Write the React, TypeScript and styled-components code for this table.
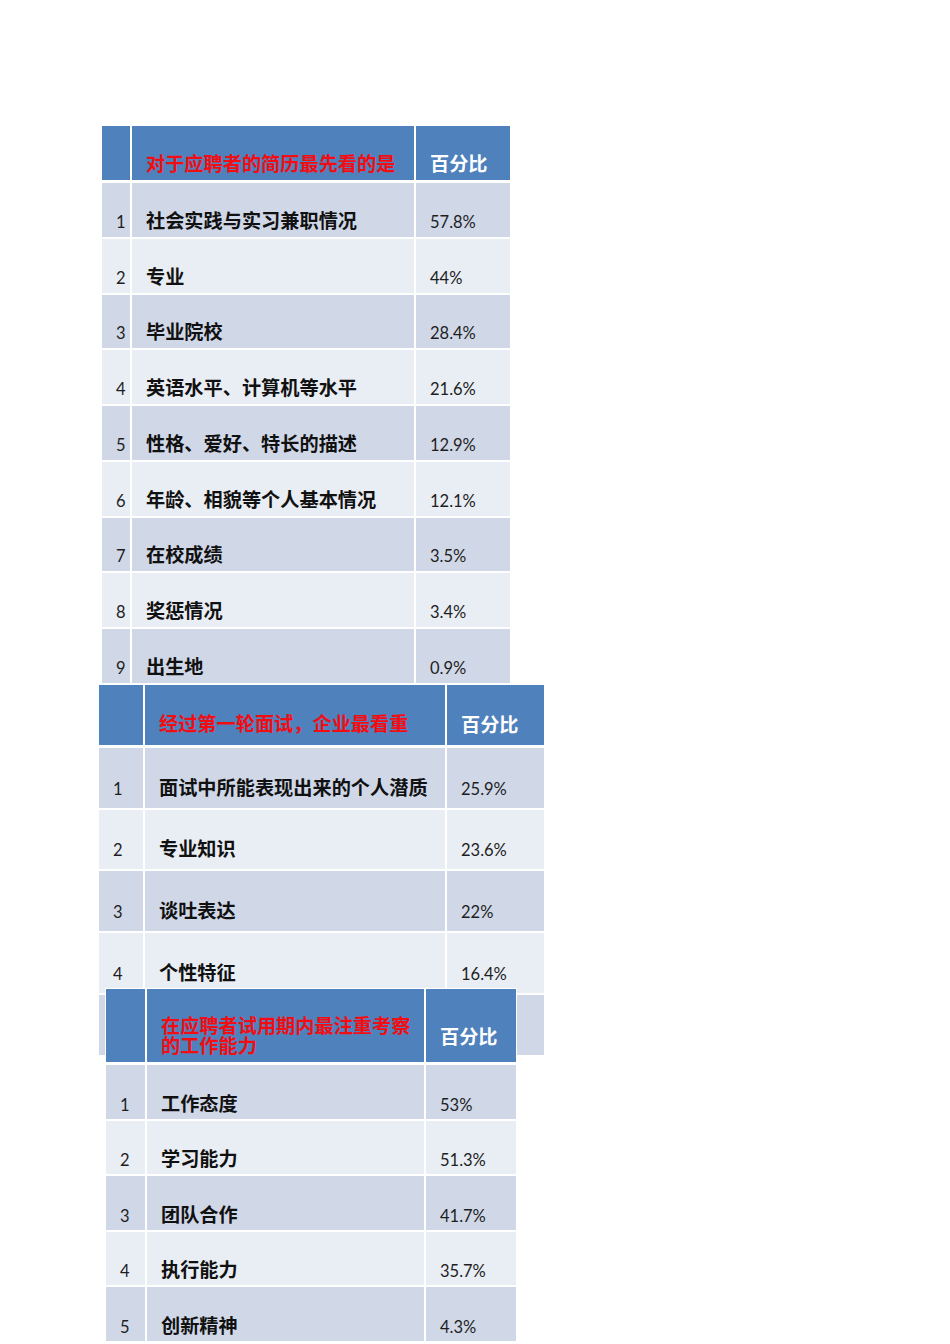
import React from "react";
import styled, { createGlobalStyle } from "styled-components";

const GlobalStyle = createGlobalStyle`
  html, body {
    margin: 0;
    padding: 0;
    background: #fff;
    overflow: hidden;
  }
`;

type Band = "head" | "odd" | "even";

const bandColor: Record<Band, string> = {
  head: "#4f81bd",
  odd: "#d0d8e8",
  even: "#e9edf4",
};

const Page = styled.main`
  width: 950px;
  height: 1344px;
  padding-top: 125px;
  box-sizing: border-box;
  display: flex;
  flex-direction: column;
  align-items: flex-start;
`;

const Sheet = styled.section<{
  $left: number;
  $cols: string;
  $head: number;
  $row: number;
  $overlap?: number;
}>`
  position: relative;
  margin-left: ${(p) => p.$left - 1}px;
  margin-top: ${(p) => (p.$overlap ? -p.$overlap : 0)}px;
  padding: 1px;
  background: #fff;
  display: grid;
  grid-template-columns: ${(p) => p.$cols};
  grid-template-rows: ${(p) => p.$head + 1}px;
  grid-auto-rows: ${(p) => p.$row}px;
  gap: 2px;
`;

const Cell = styled.div<{ $band: Band; $pad: number }>`
  background: ${(p) => bandColor[p.$band]};
  margin-bottom: ${(p) => (p.$band === "head" ? 1 : 0)}px;
  display: flex;
  align-items: flex-end;
  padding: 0 2px ${(p) => p.$pad}px 14px;
  box-sizing: border-box;
  overflow: hidden;
`;

const Num = styled.span`
  font-family: Lato, "Liberation Sans", sans-serif;
  font-size: 16.5px;
  line-height: 16px;
  color: #1e1e1e;
  white-space: nowrap;
`;

const Label = styled.span`
  font-family: "Noto Sans CJK SC", "Noto Sans", sans-serif;
  font-weight: 700;
  font-size: 19.2px;
  line-height: 19px;
  color: #111;
  white-space: nowrap;
`;

const Title = styled.span`
  font-family: "Noto Sans CJK SC", "Noto Sans", sans-serif;
  font-weight: 700;
  font-size: 19.2px;
  line-height: 19.3px;
  color: #f20d12;
`;

const HeadPct = styled(Label)`
  color: #fff;
`;

type Row = [string, string];

type TableSpec = {
  left: number;
  cols: string;
  head: number;
  row: number;
  overlap?: number;
  title: React.ReactNode;
  headPad: number;
  pctPad: number;
  rowPad: number;
  rows: Row[];
};

const tables: TableSpec[] = [
  {
    left: 102,
    cols: "28px 282px 94px",
    head: 54,
    row: 53.75,
    title: "对于应聘者的简历最先看的是",
    headPad: 7,
    pctPad: 7,
    rowPad: 7,
    rows: [
      ["社会实践与实习兼职情况", "57.8%"],
      ["专业", "44%"],
      ["毕业院校", "28.4%"],
      ["英语水平、计算机等水平", "21.6%"],
      ["性格、爱好、特长的描述", "12.9%"],
      ["年龄、相貌等个人基本情况", "12.1%"],
      ["在校成绩", "3.5%"],
      ["奖惩情况", "3.4%"],
      ["出生地", "0.9%"],
    ],
  },
  {
    left: 99,
    cols: "44px 300px 97px",
    head: 60,
    row: 59.75,
    title: "经过第一轮面试，企业最看重",
    headPad: 11,
    pctPad: 11,
    rowPad: 11,
    rows: [
      ["面试中所能表现出来的个人潜质", "25.9%"],
      ["专业知识", "23.6%"],
      ["谈吐表达", "22%"],
      ["个性特征", "16.4%"],
      ["", ""],
    ],
  },
  {
    left: 106,
    cols: "39px 277px 90px",
    head: 73,
    row: 53.5,
    overlap: 67.5,
    title: (
      <>
        在应聘者试用期内最注重考察
        <br />
        的工作能力
      </>
    ),
    headPad: 7,
    pctPad: 16,
    rowPad: 6,
    rows: [
      ["工作态度", "53%"],
      ["学习能力", "51.3%"],
      ["团队合作", "41.7%"],
      ["执行能力", "35.7%"],
      ["创新精神", "4.3%"],
    ],
  },
];

const SurveyTable = ({ t }: { t: TableSpec }) => (
  <Sheet $left={t.left} $cols={t.cols} $head={t.head} $row={t.row} $overlap={t.overlap}>
    <Cell $band="head" $pad={t.headPad} />
    <Cell $band="head" $pad={t.headPad}>
      <Title>{t.title}</Title>
    </Cell>
    <Cell $band="head" $pad={t.pctPad}>
      <HeadPct>百分比</HeadPct>
    </Cell>
    {t.rows.map(([label, pct], i) => {
      const band: Band = i % 2 === 0 ? "odd" : "even";
      return (
        <React.Fragment key={i}>
          <Cell $band={band} $pad={t.rowPad}>
            {label && <Num>{i + 1}</Num>}
          </Cell>
          <Cell $band={band} $pad={t.rowPad}>
            <Label>{label}</Label>
          </Cell>
          <Cell $band={band} $pad={t.rowPad}>
            <Num>{pct}</Num>
          </Cell>
        </React.Fragment>
      );
    })}
  </Sheet>
);

export default function App() {
  return (
    <>
      <GlobalStyle />
      <Page>
        {tables.map((t, i) => (
          <SurveyTable key={i} t={t} />
        ))}
      </Page>
    </>
  );
}
